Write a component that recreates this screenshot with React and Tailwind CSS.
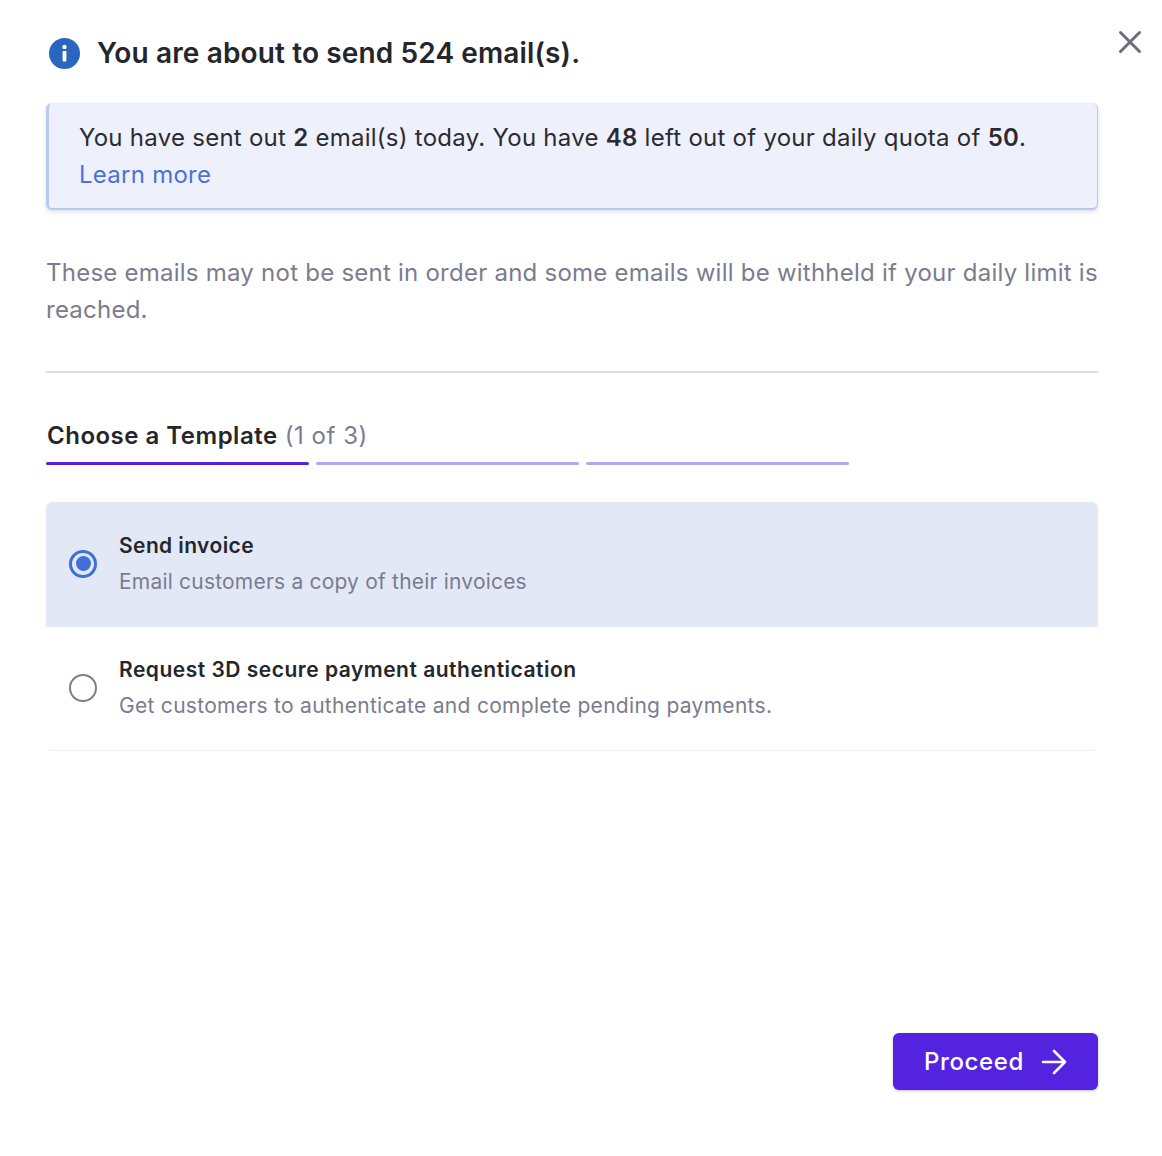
import React from "react";

function Radio({ checked }) {
  return checked ? (
    <span className="mb-[2px] ml-px flex h-[28px] w-[28px] shrink-0 items-center justify-center rounded-full border-[3px] border-[#3f6fd8]">
      <span className="h-[15px] w-[15px] rounded-full bg-[#3f6fd8]" />
    </span>
  ) : (
    <span className="mb-[2px] ml-px h-[28px] w-[28px] shrink-0 rounded-full border-2 border-[#7c7e8c]" />
  );
}

function Option({ checked, title, desc, titleClass, descClass }) {
  return (
    <div className={`flex items-center gap-[22px] pl-[22px] ${checked ? "h-[125px] rounded-t-[6px] bg-[#e2e8f6]" : "h-[124px] rounded-b-[6px] border-b border-[#f1f1f4]"}`}>
      <Radio checked={checked} />
      <div className="mb-[2px]">
        <div className={`text-[21px] font-semibold leading-[36px] text-[#25262b] ${titleClass}`}>{title}</div>
        <div className={`text-[21px] leading-[36px] text-[#7b7c8d] ${descClass}`}>{desc}</div>
      </div>
    </div>
  );
}

export default function App() {
  return (
    <div className="relative h-[1156px] w-[1162px] overflow-hidden bg-white pl-[46px] pr-[64px] font-['Inter',sans-serif]">
      <button className="absolute left-[1116px] top-[28px] text-[#6b6c7e]" aria-label="Close">
        <svg width="28" height="28" viewBox="0 0 28 28" fill="none" stroke="currentColor" strokeWidth="3" strokeLinecap="round">
          <path d="M4.5 4.5 23.5 23.5M23.5 4.5 4.5 23.5" />
        </svg>
      </button>

      <div className="flex h-[103px] items-center gap-[17px] pl-[3px] pt-[4px]">
        <svg width="31" height="31" viewBox="0 0 31 31">
          <circle cx="15.5" cy="15.5" r="15.5" fill="#2a66bd" />
          <circle cx="15.5" cy="9" r="2.2" fill="#fff" />
          <rect x="13.6" y="13" width="3.8" height="10.5" rx="0.8" fill="#fff" />
        </svg>
        <h1 className="mb-[2px] text-[28px] font-semibold leading-[36px] tracking-[0.13px] text-[#25262b]">You are about to send 524 email(s).</h1>
      </div>

      <div className="h-[107px] rounded-[6px] border-b-2 border-l-[3px] border-r border-[#b9c8ec] bg-[#eef1fb] pl-[30px] pt-[16px] text-[24px] leading-[37px] tracking-[0.26px] text-[#2b2c31] shadow-[0_2px_4px_rgba(60,80,140,0.18)]">
        <p>
          You have sent out <b className="font-semibold">2</b> email(s) today. You have <b className="font-semibold">48</b> left out of your daily quota of <b className="font-semibold">50</b>.
        </p>
        <a className="text-[#4a72d9]">Learn more</a>
      </div>

      <p className="mt-[44px] text-[24px] leading-[37px] tracking-[0.24px] text-[#7b7c8d]">
        These emails may not be sent in order and some emails will be withheld if your daily limit is reached.
      </p>

      <hr className="mt-[43px] border-t-2 border-[#dcdcdf]" />

      <div className="mt-[44px] pl-px text-[24px] leading-[37px] tracking-[0.5px]">
        <span className="font-semibold text-[#25262b]">Choose a Template</span>{" "}
        <span className="text-[#7b7c8d]">(1 of 3)</span>
      </div>

      <div className="mt-[8px] flex gap-[7px]">
        <div className="h-[3px] w-[263px] rounded-full bg-[#5423e0]" />
        <div className="h-[3px] w-[263px] rounded-full bg-[#b3a8f0]" />
        <div className="h-[3px] w-[263px] rounded-full bg-[#b3a8f0]" />
      </div>

      <div className="mt-[37px]">
        <Option checked title="Send invoice" desc="Email customers a copy of their invoices" titleClass="tracking-[0.4px]" descClass="tracking-[0.2px]" />
        <Option title="Request 3D secure payment authentication" desc="Get customers to authenticate and complete pending payments." titleClass="tracking-[0.5px]" descClass="tracking-[0.29px]" />
      </div>

      <div className="mt-[282px] flex justify-end">
        <button className="flex h-[57px] w-[205px] items-center justify-center gap-[17px] rounded-[6px] bg-[#5423e0] text-[24px] font-medium tracking-[0.6px] text-white shadow-[0_1px_3px_rgba(60,40,140,0.3)]">
          Proceed
          <svg width="26" height="26" viewBox="0 0 26 26" fill="none" stroke="currentColor" strokeWidth="2.6" strokeLinecap="round" strokeLinejoin="round">
            <path d="M2 13H24M13 2 24 13 13 24" />
          </svg>
        </button>
      </div>
    </div>
  );
}
